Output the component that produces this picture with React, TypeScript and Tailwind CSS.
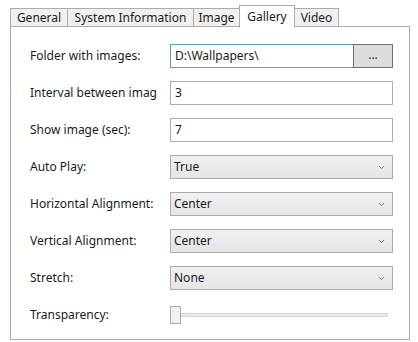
import { ChevronDown } from "lucide-react"

const tabs = [
  { name: "General", w: "w-[58px]" },
  { name: "System Information", w: "w-[127px]" },
  { name: "Image", w: "w-[47px]" },
  { name: "Gallery", w: "w-[56px]" },
  { name: "Video", w: "w-[45px]" },
]

function Row({ label, children }: { label: string; children: React.ReactNode }) {
  return (
    <div className="flex items-center h-[24px]">
      <div className="w-[127px] mr-[13px] overflow-hidden whitespace-nowrap">{label}</div>
      <div className="flex-1 flex h-full">{children}</div>
    </div>
  )
}

function TextBox({ value, focused }: { value: string; focused?: boolean }) {
  return (
    <div
      className={`flex-1 flex items-center pl-[4px] bg-white border ${focused ? "border-[#569de5]" : "border-[#abadb3]"}`}
    >
      {value}
    </div>
  )
}

function Select({ value }: { value: string }) {
  return (
    <div className="flex-1 flex items-center justify-between pl-[3px] pr-[6px] border border-[#acacac] bg-gradient-to-b from-[#f0f0f0] to-[#e5e5e5]">
      <span>{value}</span>
      <ChevronDown size={9} strokeWidth={2.5} className="text-[#707070]" />
    </div>
  )
}

export default function App() {
  return (
    <div
      className="w-[418px] h-[342px] bg-white text-[12px] text-[#1a1a1a] pt-[5px]"
      style={{ fontFamily: '"Segoe UI", "Noto Sans", sans-serif' }}
    >
      <div className="flex items-end pl-[10px] relative z-10">
        {tabs.map((t) => {
          const active = t.name === "Gallery"
          return (
            <div
              key={t.name}
              className={`${t.w} border border-[#acacac] -ml-px first:ml-0 flex items-center justify-center whitespace-nowrap ${
                active ? "h-[23px] bg-white border-b-white -mb-px" : "h-[19px] bg-[#f0f0f0]"
              }`}
            >
              {t.name}
            </div>
          )
        })}
      </div>
      <div className="mx-[10px] w-[400px] h-[314px] -mt-px border border-[#acacac] pt-[17px] pl-[19px] pr-[16px] flex flex-col gap-[13px]">
        <Row label="Folder with images:">
          <TextBox value="D:\Wallpapers\" focused />
          <div className="w-[40px] flex items-center justify-center border border-[#707070] bg-[#dddddd] -ml-px leading-none pb-[2px]">
            ...
          </div>
        </Row>
        <Row label="Interval between images (sec):">
          <TextBox value="3" />
        </Row>
        <Row label="Show image (sec):">
          <TextBox value="7" />
        </Row>
        <Row label="Auto Play:">
          <Select value="True" />
        </Row>
        <Row label="Horizontal Alignment:">
          <Select value="Center" />
        </Row>
        <Row label="Vertical Alignment:">
          <Select value="Center" />
        </Row>
        <Row label="Stretch:">
          <Select value="None" />
        </Row>
        <Row label="Transparency:">
          <div className="flex-1 flex items-center pr-[5px]">
            <div className="w-[11px] h-[18px] border border-[#acacac] bg-[#f0f0f0] shrink-0" />
            <div className="flex-1 h-[4px] border border-[#d6d6d6] bg-[#e7eaea]" />
          </div>
        </Row>
      </div>
    </div>
  )
}
